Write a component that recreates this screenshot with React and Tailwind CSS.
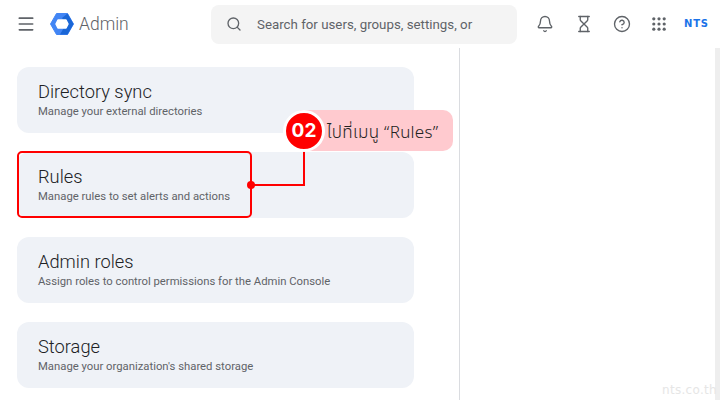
import React from "react";
import { Menu, Search, Bell, Hourglass, CircleHelp } from "lucide-react";

const cards = [
  ["Directory sync", "Manage your external directories"],
  ["Rules", "Manage rules to set alerts and actions"],
  ["Admin roles", "Assign roles to control permissions for the Admin Console"],
  ["Storage", "Manage your organization's shared storage"],
];

function Logo() {
  return (
    <svg width="24" height="22" viewBox="0 0 24 22">
      <path d="M6.5 0.5H17.5L23.5 11L17.5 21.5H6.5L0.5 11Z" fill="#4285f4" strokeLinejoin="round" stroke="#4285f4" />
      <path d="M17.5 0.5L23.5 11L17.5 21.5H10L16 11L12 5Z" fill="#1a66d6" />
      <path d="M8 7H16L18 11L16 15H8L6 11Z" fill="#fff" strokeLinejoin="round" stroke="#fff" strokeWidth="1.5" />
    </svg>
  );
}

function Grid() {
  return (
    <svg width="14" height="14" viewBox="0 0 14 14" fill="#5f6368">
      {[1.8, 7, 12.2].flatMap((y) =>
        [1.8, 7, 12.2].map((x) => <circle key={`${x}-${y}`} cx={x} cy={y} r="1.6" />)
      )}
    </svg>
  );
}

export default function App() {
  return (
    <div className="relative h-[400px] w-[720px] overflow-hidden bg-white font-['Roboto',sans-serif]">
      <header className="flex h-12 items-center">
        <Menu className="ml-[16px] h-5 w-5 text-[#5f6368]" strokeWidth={2} />
        <div className="ml-[14px]"><Logo /></div>
        <span className="ml-[5px] w-[49px] translate-y-px text-[17.5px] font-light leading-none text-[#5f6368]">Admin</span>
        <div className="ml-[83px] flex h-[39px] w-[306px] items-center rounded-lg bg-[#f4f4f4]">
          <Search className="ml-[15px] h-[16px] w-[16px] text-[#5f6368]" strokeWidth={2} />
          <span className="ml-[15px] translate-y-px text-[13.3px] text-[#5f6368]">Search for users, groups, settings, or</span>
        </div>
        <Bell className="ml-[19px] h-[18px] w-[18px] text-[#5f6368]" strokeWidth={1.8} />
        <Hourglass className="ml-[21px] h-[18px] w-[18px] text-[#5f6368]" strokeWidth={1.8} />
        <CircleHelp className="ml-[20px] h-[18px] w-[18px] text-[#5f6368]" strokeWidth={1.8} />
        <div className="ml-[21px]"><Grid /></div>
        <span className="ml-[18px] text-[10px] font-bold leading-none tracking-[0.8px] text-[#1a73e8] font-['DejaVu_Sans',sans-serif]">NTS</span>
      </header>

      <div className="flex h-[352px]">
        <main className="flex w-[460px] flex-col gap-[19px] border-r border-[#dadce0] pl-[17px] pt-[19px]">
          {cards.map(([title, sub]) => (
            <section key={title} className="flex h-[66px] w-[397px] flex-col justify-center rounded-xl bg-[#eff2f7] pl-[21px]">
              <h2 className="text-[18.3px] font-[350] leading-[24px] text-[#202124]">{title}</h2>
              <p className="text-[11.3px] leading-[16px] text-[#5f6368]">{sub}</p>
            </section>
          ))}
        </main>
      </div>

      {/* Annotation overlay */}
      <div className="absolute left-[17px] top-[151px] h-[67px] w-[235px] rounded-[5px] border-2 border-[#ff0000]" />
      <div className="absolute left-[247px] top-[181px] h-2 w-2 rounded-full bg-[#ff0000]" />
      <div className="absolute left-[251px] top-[150px] h-[36px] w-[54px] border-b-2 border-r-2 border-[#ff0000]" />
      <div className="absolute left-[300px] top-[110px] flex h-[41px] w-[153px] items-center rounded-r-[10px] bg-[#ffcacf] pl-[27px]">
        <span className="translate-y-px whitespace-nowrap text-[17px] font-light tracking-[0.3px] text-[#222222] font-['Noto_Sans','Noto_Sans_Thai',sans-serif]">ไปที่เมนู “Rules”</span>
      </div>
      <div className="absolute left-[283px] top-[110px] flex h-[42px] w-[42px] items-center justify-center rounded-full border-[3px] border-white bg-[#ff0000] text-[19px] font-bold text-white font-['Inter',sans-serif]">02</div>

      <div className="absolute right-0 top-[48px] h-[352px] w-[5px] bg-[#eeeeee]" />
      <span className="absolute left-[662px] top-[384px] text-[12px] leading-none tracking-[0.3px] text-[#e6e6e6] font-['DejaVu_Sans',sans-serif]">nts.co.th</span>
    </div>
  );
}
